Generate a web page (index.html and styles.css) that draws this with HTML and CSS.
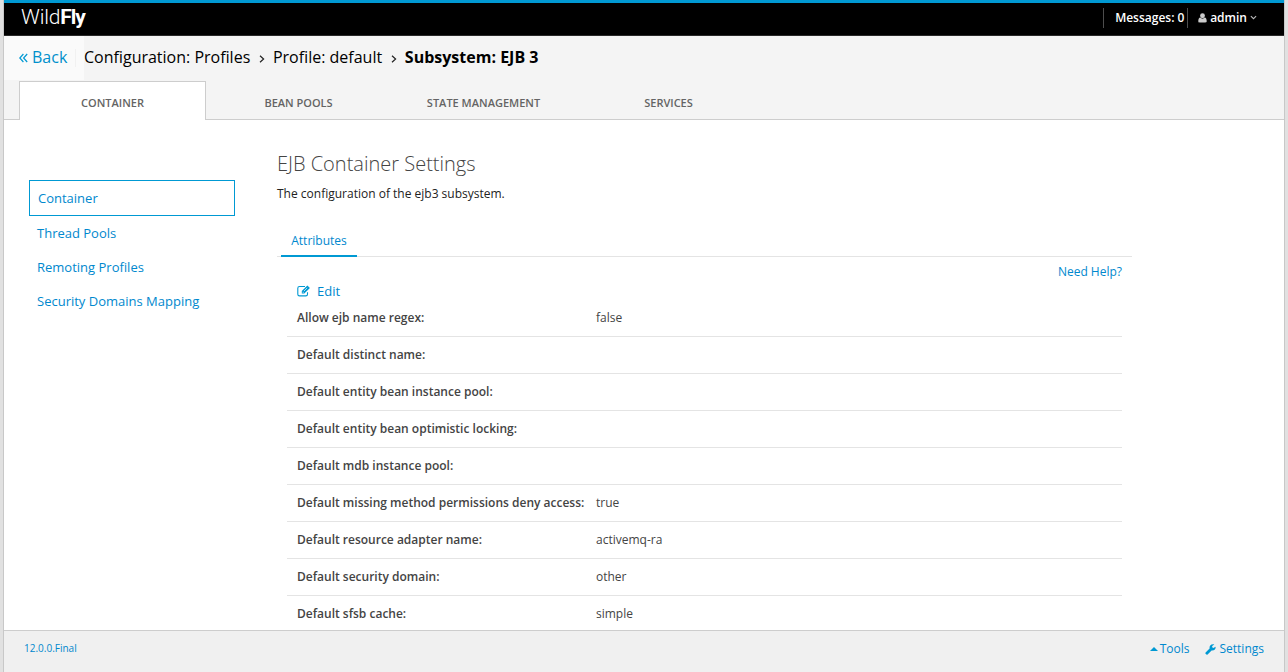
FILE: index.html
```html
<!DOCTYPE html>
<html lang="en">
<head>
<meta charset="utf-8">
<title>WildFly Management</title>
<link rel="stylesheet" href="styles.css">
</head>
<body>
<div class="frame">
  <header class="topbar">
    <div class="brand"><span class="brand-light">Wild</span><span class="brand-bold">Fly</span></div>
    <div class="messages">Messages: 0</div>
    <div class="user">
      <svg class="user-icon" viewBox="0 0 10 11"><circle cx="5" cy="3" r="2.7"/><path d="M0.3 9.2C0.3 6.5 1.2 5 2.6 5C4 6.6 6 6.6 7.4 5C8.8 5 9.7 6.5 9.7 9.2C9.7 10.2 9 10.5 8.2 10.5H1.8C1 10.5 .3 10.2 .3 9.2Z"/></svg>
      <span class="user-name">admin</span>
      <svg class="chevron" viewBox="0 0 8 5"><path d="M1 .8L4 3.8L7 .8"/></svg>
    </div>
  </header>
  <nav class="crumbs">
    <a class="back"><svg class="back-icon" viewBox="0 0 9 10"><path d="M4.4 1L.8 5L4.4 9M8.2 1L4.6 5L8.2 9"/></svg><span class="back-text">Back</span></a>
    <span class="crumb crumb-config">Configuration: Profiles</span>
    <svg class="sep" viewBox="0 0 6 8"><path d="M1 .7L4.6 4L1 7.3"/></svg>
    <span class="crumb crumb-profile">Profile: default</span>
    <svg class="sep" viewBox="0 0 6 8"><path d="M1 .7L4.6 4L1 7.3"/></svg>
    <span class="crumb current">Subsystem: EJB 3</span>
  </nav>
  <div class="tabs">
    <div class="tab active">CONTAINER</div>
    <div class="tab">BEAN POOLS</div>
    <div class="tab">STATE MANAGEMENT</div>
    <div class="tab">SERVICES</div>
  </div>
  <div class="content">
    <aside class="side">
      <a class="side-item selected">Container</a>
      <a class="side-item">Thread Pools</a>
      <a class="side-item">Remoting Profiles</a>
      <a class="side-item">Security Domains Mapping</a>
    </aside>
    <main class="main">
      <h1 class="title">EJB Container Settings</h1>
      <p class="desc">The configuration of the ejb3 subsystem.</p>
      <div class="subtabs"><a class="subtab">Attributes</a></div>
      <div class="panel">
        <a class="help">Need Help?</a>
        <a class="edit"><svg class="edit-icon" viewBox="0 0 14 12"><path class="edit-box" d="M10.5 7.2V9.2Q10.5 10.9 8.8 10.9H2.5Q.8 10.9 .8 9.2V3.2Q.8 1.5 2.5 1.5H8"/><path class="edit-pen" d="M4.8 8.6V6.1L10.4 .6L12.9 3.1L7.3 8.6Z"/><path class="edit-cut" d="M6.8 6.2L10.2 2.9M5.6 6.9L6.5 7.8"/></svg>Edit</a>
        <dl class="attrs">
          <div class="row"><dt>Allow ejb name regex:</dt><dd>false</dd></div>
          <div class="row"><dt>Default distinct name:</dt><dd></dd></div>
          <div class="row"><dt>Default entity bean instance pool:</dt><dd></dd></div>
          <div class="row"><dt>Default entity bean optimistic locking:</dt><dd></dd></div>
          <div class="row"><dt>Default mdb instance pool:</dt><dd></dd></div>
          <div class="row"><dt>Default missing method permissions deny access:</dt><dd>true</dd></div>
          <div class="row"><dt>Default resource adapter name:</dt><dd>activemq-ra</dd></div>
          <div class="row"><dt>Default security domain:</dt><dd>other</dd></div>
          <div class="row"><dt>Default sfsb cache:</dt><dd>simple</dd></div>
        </dl>
      </div>
    </main>
  </div>
  <footer class="footer">
    <a class="version">12.0.0.Final</a>
    <a class="tools"><svg class="caret" viewBox="0 0 8 4"><path d="M0 4L4 0L8 4Z"/></svg>Tools</a>
    <a class="settings"><svg class="wrench" viewBox="0 0 11 11"><path d="M.6 8.4L4.6 4.5C4.1 2.1 5.8 .1 8.5 .3L9.3 .6L7.2 1.9V3.3L8.3 4L10.6 2.7C11 4.9 9.2 6.7 6.6 6.4L2.6 10.4Q1.8 11 1.1 10.3L.6 9.8Q0 9.1 .6 8.4Z"/></svg>Settings</a>
  </footer>
</div>
</body>
</html>
```
FILE: styles.css
```css
* { box-sizing: border-box; }
body {
  margin: 0;
  background: #e1e1e1;
  font-family: "Open Sans", sans-serif;
  font-size: 12px;
  color: #333;
  overflow: hidden;
}
svg { flex: none; display: block; }
.frame {
  display: flex;
  flex-direction: column;
  height: 672px;
  margin: 0 3px;
  border: solid #c8c8c8;
  border-width: 0 1px;
  background: #fff;
}
.topbar {
  display: flex;
  align-items: center;
  height: 36px;
  flex: none;
  padding: 0 27px 0 17px;
  background: #000;
  border-top: 3px solid #0099d3;
  border-bottom: 1px solid #292929;
  color: #fff;
}
.brand { flex: 1; font-family: Roboto, "Open Sans", sans-serif; font-size: 21px; line-height: 28px; letter-spacing: -0.2px; padding-bottom: 4px; }
.brand-light { font-weight: 300; }
.brand-bold { font-weight: 700; letter-spacing: -1px; }
.messages {
  height: 20px;
  line-height: 20px;
  width: 85px;
  padding-left: 11px;
  border: solid #4d4d4d;
  border-width: 0 1px;
  font-weight: 600;
  white-space: nowrap;
  margin-bottom: 3px;
}
.user { display: flex; align-items: center; padding-left: 10px; line-height: 20px; margin-bottom: 3px; }
.user-icon { width: 9px; height: 10px; fill: #ccc; margin-right: 3px; }
.user-name { font-weight: 600; font-size: 12px; }
.chevron { width: 7px; height: 5px; margin-left: 3px; fill: none; stroke: #bbb; stroke-width: 1.2; }
.crumbs {
  display: flex;
  align-items: center;
  height: 44px;
  flex: none;
  background: #f4f4f4;
  font-size: 16px;
  color: #000;
}
.back {
  display: flex;
  align-items: center;
  width: 80px;
  height: 44px;
  padding-left: 15px;
  background: #fafafa;
  color: #0090cc;
}
.back-icon { width: 9px; height: 10px; margin-right: 4px; fill: none; stroke: #0099d3; stroke-width: 1.2; }
.back-text { width: 44px; height: 18px; line-height: 16px; border-right: 1px solid #f1f1f1; }
.crumb { line-height: 22px; white-space: nowrap; padding-bottom: 2px; }
.sep { width: 6px; height: 8px; margin: 1px 8px 0 8.7px; fill: none; stroke: #222; stroke-width: 1.2; }
.current { font-weight: 700; }
.tabs {
  display: flex;
  height: 40px;
  flex: none;
  padding: 1px 0 0 15px;
  background: #f4f4f4;
  box-shadow: inset 0 -1px #cdcdcd;
}
.tab { width: 185px; text-align: center; line-height: 43px; font-size: 11px; font-weight: 600; color: #646464; }
.tab.active { width: 187px; background: #fff; border: 1px solid #cdcdcd; border-bottom: 0; line-height: 41px; }
.content { display: flex; flex: 1; min-height: 0; overflow: hidden; }
.side { width: 273px; padding: 60px 42px 0 25px; font-size: 13px; color: #0088ce; }
.side-item { display: block; height: 34px; line-height: 34px; padding-left: 8px; }
.side-item.selected { height: 36px; border: 1px solid #0099d3; line-height: 34px; }
.main { width: 855px; }
.title { margin: 31px 0 0; font-size: 20px; line-height: 26px; font-weight: 300; color: #444; }
.desc { margin: 8px 0 0; line-height: 18px; color: #222; }
.subtabs { height: 32px; margin-top: 22px; padding-left: 4px; border-bottom: 1px solid #e4e4e4; }
.subtab { display: block; width: 76px; height: 32px; line-height: 32px; text-align: center; border-bottom: 2px solid #0099d3; color: #0088ce; }
.panel { display: flex; flex-direction: column; padding: 6px 10px 0; }
.help { align-self: flex-end; line-height: 18px; color: #0088ce; }
.edit { display: flex; align-items: center; height: 20px; padding-left: 10px; font-size: 13px; color: #0088ce; }
.edit-icon { width: 14px; height: 12px; margin-right: 6px; }
.edit-box { fill: none; stroke: #0099d3; stroke-width: 1.1; }
.edit-pen { fill: #0099d3; }
.edit-cut { stroke: #fff; stroke-width: .7; }
.attrs { margin: 0; }
.row { display: flex; height: 37px; padding: 8px 10px 0; line-height: 20px; border-bottom: 1px solid #e4e4e4; white-space: nowrap; }
.row:first-child { height: 36px; padding-top: 7px; }
.row dt { width: 299px; font-weight: 600; color: #444; }
.row dd { margin: 0; color: #444; }
.footer {
  display: flex;
  height: 42px;
  flex: none;
  padding: 8px 20px 0;
  background: #f0f0f0;
  border-top: 1px solid #cdcdcd;
  line-height: 20px;
  color: #0088ce;
}
.version { flex: 1; font-size: 10px; line-height: 18px; }
.tools, .settings { display: flex; align-items: center; height: 20px; }
.caret { width: 8px; height: 4px; margin-right: 2px; fill: #0099d3; }
.settings { margin-left: 15px; }
.wrench { width: 11px; height: 11px; margin-right: 4px; fill: #0099d3; }
```
